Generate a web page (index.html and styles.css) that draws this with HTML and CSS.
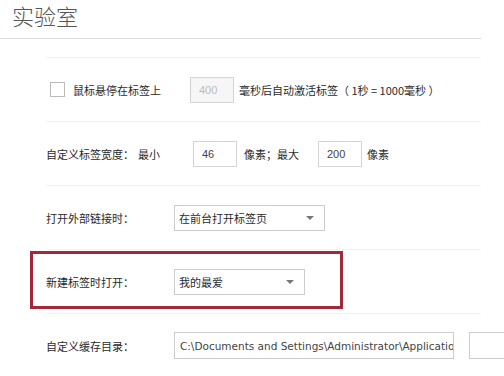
FILE: index.html
```html
<!DOCTYPE html>
<html lang="zh-CN">
<head>
    <meta charset="UTF-8">
    <meta name="viewport" content="width=device-width, initial-scale=1.0">
    <title>实验室</title>
    <link rel="stylesheet" href="styles.css">
</head>
<body>
<div id="header">
    <h1>实验室</h1>
</div>
<div id="settings">
    <div class="row">
        <span class="checkbox"></span>
        <span class="label-check">鼠标悬停在标签上</span>
        <input class="num disabled" type="text" value="400" disabled>
        <span class="text">毫秒后自动激活标签（ 1秒 = 1000毫秒 ）</span>
    </div>
    <div class="row">
        <span class="label-width">自定义标签宽度：</span>
        <span class="text">最小</span>
        <input class="num min" type="text" value="46">
        <span class="text">像素；最大</span>
        <input class="num max" type="text" value="200">
        <span class="text">像素</span>
    </div>
    <div class="row">
        <span class="label">打开外部链接时：</span>
        <div class="select wide">在前台打开标签页<span class="arrow"></span></div>
    </div>
    <div class="row marked">
        <span class="label">新建标签时打开：</span>
        <div class="select">我的最爱<span class="arrow"></span></div>
        <div class="highlight"></div>
    </div>
    <div class="row">
        <span class="label">自定义缓存目录：</span>
        <input class="path" type="text" value="C:\Documents and Settings\Administrator\Application Data">
        <span class="browse"></span>
    </div>
</div>
</body>
</html>
```

FILE: styles.css
```css
body {
    font-family: 'Noto Sans CJK SC', 'Liberation Sans', sans-serif;
    background-color: #fff;
    color: #2a2a2a;
    margin: 0;
    padding: 0;
    overflow: hidden;
}

#header {
    width: 481px;
    height: 38px;
    border-bottom: 1px solid #dcdcdc;
}

#header h1 {
    margin: 0;
    padding-left: 12px;
    font-size: 22px;
    font-weight: 300;
    line-height: 30px;
    color: #555;
}

#settings {
    margin-left: 46px;
    padding-top: 18px;
    width: 435px;
}

.row {
    position: relative;
    display: flex;
    align-items: center;
    height: 63px;
    border-top: 1px solid #f2f2f2;
    font-size: 11px;
    white-space: nowrap;
}

.row > * {
    flex-shrink: 0;
}

.checkbox {
    width: 13px;
    height: 13px;
    margin-left: 4px;
    border: 1px solid #bbb;
    background-color: #fff;
}

.label-check {
    margin-left: 8px;
    width: 117px;
}

.label-width {
    width: 92px;
}

.label {
    width: 128px;
}

.num {
    box-sizing: border-box;
    width: 44px;
    height: 26px;
    padding: 0 0 0 8px;
    border: 1px solid #d4d4d4;
    font-family: 'Liberation Sans', sans-serif;
    font-size: 11px;
    color: #444;
    background-color: #fff;
}

.num.disabled {
    background-color: #f6f6f6;
    color: #bbb;
    margin-right: 5px;
}

.num.min {
    margin-left: 33px;
    margin-right: 7px;
}

.num.max {
    margin-left: 19px;
    margin-right: 5px;
}

.select {
    position: relative;
    box-sizing: border-box;
    width: 131px;
    height: 26px;
    line-height: 24px;
    padding-left: 4px;
    border: 1px solid #ccc;
    background-color: #fff;
}

.select.wide {
    width: 151px;
}

.arrow {
    position: absolute;
    right: 10px;
    top: 10px;
    border-left: 4px solid transparent;
    border-right: 4px solid transparent;
    border-top: 4px solid #777;
}

.highlight {
    position: absolute;
    left: -16px;
    top: 1px;
    width: 307px;
    height: 52px;
    border: 3px solid #a3283a;
    pointer-events: none;
}

.path {
    box-sizing: border-box;
    width: 280px;
    height: 27px;
    padding: 0 0 0 5px;
    border: 1px solid #ccc;
    font-family: 'DejaVu Sans', sans-serif;
    font-size: 10.5px;
    color: #444;
    background-color: #fff;
}

.browse {
    box-sizing: border-box;
    width: 40px;
    height: 27px;
    margin-left: 15px;
    border: 1px solid #ccc;
}
```
